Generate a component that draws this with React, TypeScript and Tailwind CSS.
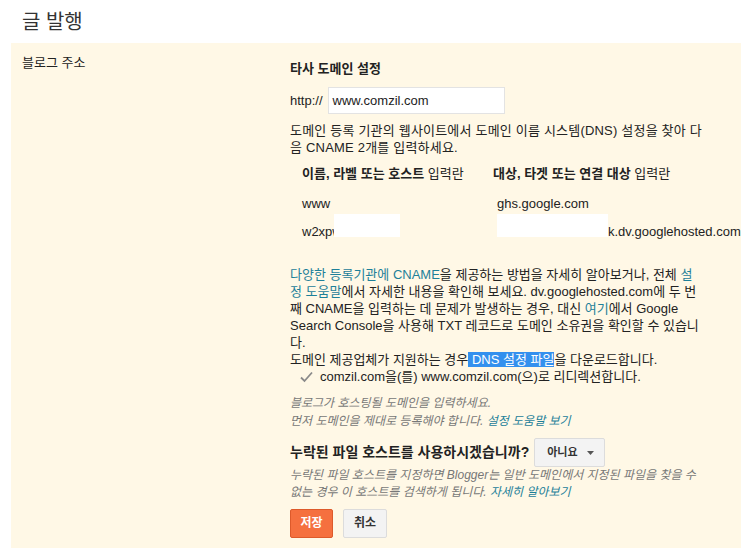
import React from "react";

const L = "text-[#1d8099]";

export default function App() {
  return (
    <div
      className="w-[752px] h-[554px] bg-white text-[#222] text-[13px] leading-[17px] overflow-hidden"
      style={{ fontFamily: '"Liberation Sans", "Noto Sans CJK KR", sans-serif' }}
    >
      <h1 className="pl-[22px] pt-[10px] text-[20px] leading-[24px] text-[#333] font-normal">글 발행</h1>
      <div className="ml-[11px] mt-[9px] w-[730px] bg-[#fff8e6] flex pb-[10px]">
        <div className="w-[279px] pl-[11px] pt-[11px] shrink-0">블로그 주소</div>
        <div className="pt-[17px] w-[451px] shrink-0">
          <div className="font-bold">타사 도메인 설정</div>
          <div className="mt-[10px] flex items-center h-[27px]">
            <span className="mr-[5px]">http://</span>
            <div className="w-[177px] h-[27px] bg-white border border-[#e3e3e3] flex items-center pl-[4px]">
              www.comzil.com
            </div>
          </div>
          <div className="mt-[8px] whitespace-nowrap tracking-[0.2px]">
            도메인 등록 기관의 웹사이트에서 도메인 이름 시스템(DNS) 설정을 찾아 다
            <br />
            음 CNAME 2개를 입력하세요.
          </div>
          <div className="pl-[12px] mt-[9px]">
            <div className="flex whitespace-nowrap">
              <div className="w-[191px]">
                <span className="font-bold">이름, 라벨 또는 호스트</span> 입력란
              </div>
              <div>
                <span className="font-bold">대상, 타겟 또는 연결 대상</span> 입력란
              </div>
            </div>
            <div className="flex mt-[13px] whitespace-nowrap">
              <div className="w-[191px]">www</div>
              <div className="pl-[4px]">ghs.google.com</div>
            </div>
            <div className="flex mt-[2px] h-[23px] whitespace-nowrap">
              <div className="w-[191px] flex">
                <span className="pt-[9px]">w2xpw</span>
                <span className="relative -ml-[8px] w-[66px] h-[23px] bg-white" />
              </div>
              <div className="flex pl-[4px]">
                <span className="w-[111px] h-[23px] bg-white" />
                <span className="pt-[9px]">k.dv.googlehosted.com</span>
              </div>
            </div>
          </div>
          <div className="mt-[29px] whitespace-nowrap">
            <span className={L}>다양한 등록기관에 CNAME</span>을 제공하는 방법을 자세히 알아보거나, 전체 <span className={L}>설</span>
            <br />
            <span className={L}>정 도움말</span>에서 자세한 내용을 확인해 보세요. dv.googlehosted.com에 두 번
            <br />
            째 CNAME을 입력하는 데 문제가 발생하는 경우, 대신 <span className={L}>여기</span>에서 Google
            <br />
            Search Console을 사용해 TXT 레코드로 도메인 소유권을 확인할 수 있습니
            <br />
            다.
            <br />
            도메인 제공업체가 지원하는 경우<span className="bg-[#3390ee] text-white"> DNS 설정 파일</span>을 다운로드합니다.
          </div>
          <div className="flex items-center whitespace-nowrap">
            <span className="w-[30px] pl-[10px] flex items-center">
              <svg width="13" height="12" viewBox="0 0 13 12">
                <path d="M1 6.5 L4.5 10 L12 1.5" fill="none" stroke="#8a8a8a" strokeWidth="1.8" />
              </svg>
            </span>
            <span>comzil.com을(를) www.comzil.com(으)로 리디렉션합니다.</span>
          </div>
          <div className="mt-[9px] italic text-[12px] leading-[18px] text-[#777] whitespace-nowrap">
            블로그가 호스팅될 도메인을 입력하세요.
            <br />
            먼저 도메인을 제대로 등록해야 합니다. <span className={L}>설정 도움말 보기</span>
          </div>
          <div className="mt-[8px] flex items-center h-[29px]">
            <span className="font-bold text-[14px] mr-[5px]">누락된 파일 호스트를 사용하시겠습니까?</span>
            <div className="h-[29px] w-[71px] bg-[#f3f3f3] border border-[#dcdcdc] rounded-[2px] flex items-center pl-[12px] text-[11px] font-bold text-[#333]">
              아니요
              <svg width="7" height="4" viewBox="0 0 7 4" className="ml-[9px]">
                <path d="M0 0 L7 0 L3.5 4 Z" fill="#555" />
              </svg>
            </div>
          </div>
          <div className="italic text-[12px] text-[#777] whitespace-nowrap">
            누락된 파일 호스트를 지정하면 Blogger는 일반 도메인에서 지정된 파일을 찾을 수
            <br />
            없는 경우 이 호스트를 검색하게 됩니다. <span className={L}>자세히 알아보기</span>
          </div>
          <div className="mt-[8px] flex gap-[10px]">
            <button className="h-[29px] w-[43px] bg-[#f5703f] border border-[#dd5a2b] rounded-[2px] text-white font-bold text-[12px]">
              저장
            </button>
            <button className="h-[29px] w-[44px] bg-[#f3f3f3] border border-[#dcdcdc] rounded-[2px] text-[#333] font-bold text-[12px]">
              취소
            </button>
          </div>
        </div>
      </div>
    </div>
  );
}
